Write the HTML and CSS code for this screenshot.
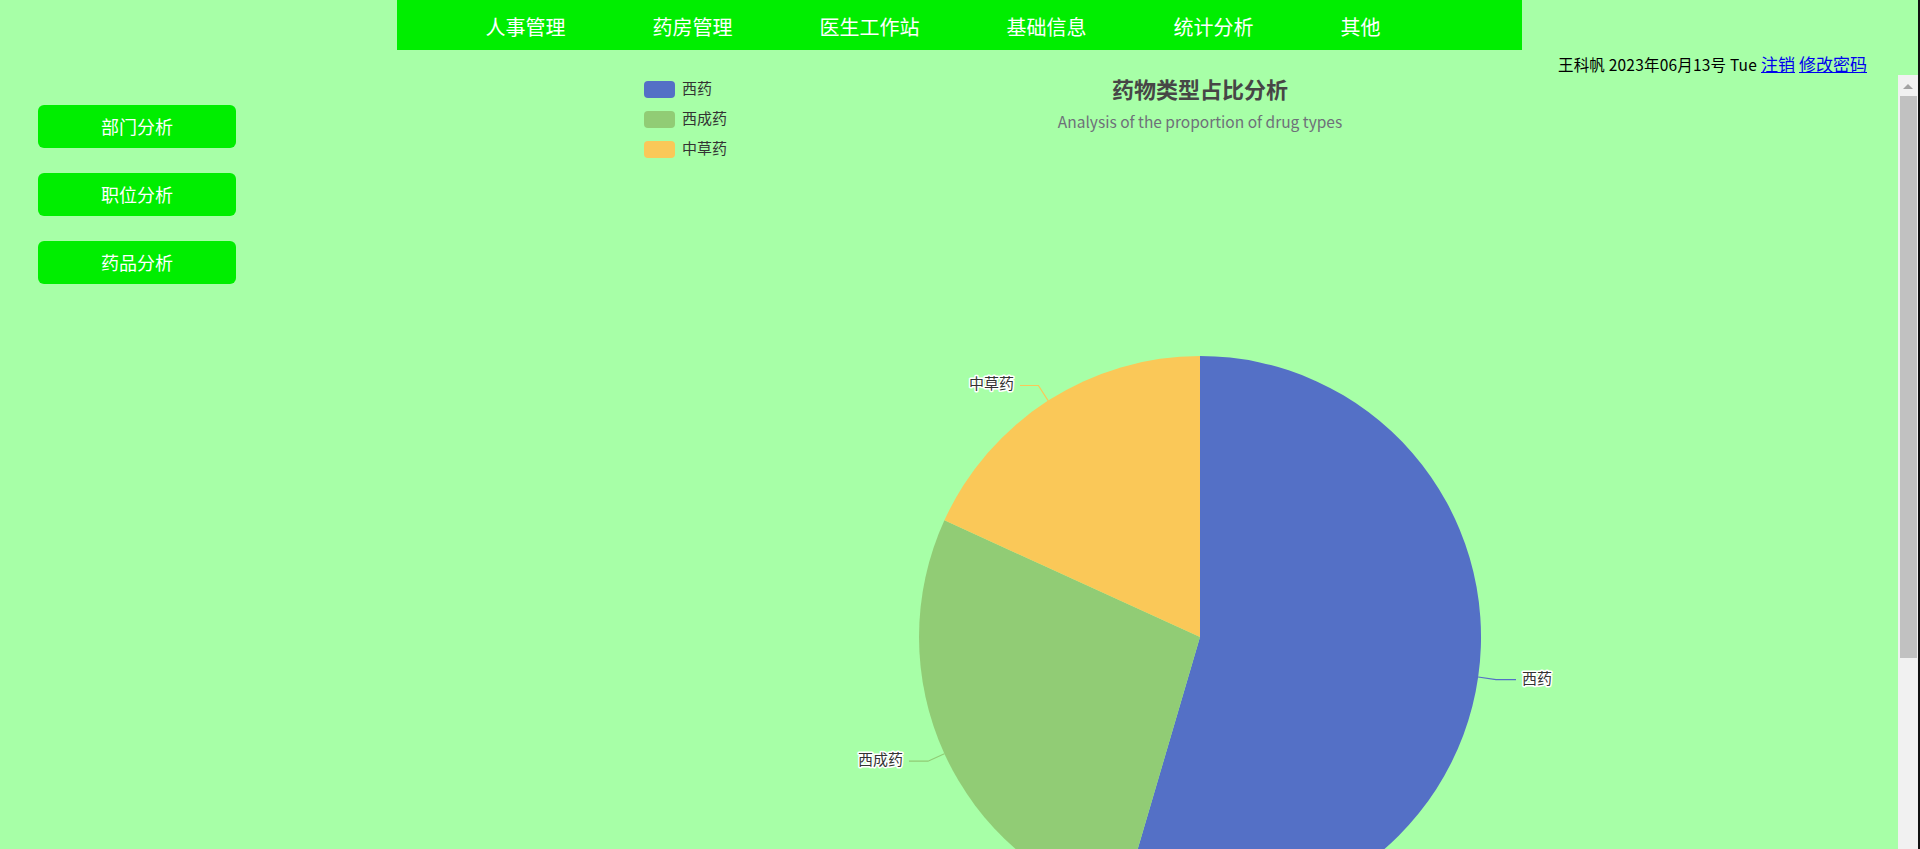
FILE: index.html
```html
<!DOCTYPE html>
<html lang="zh-CN">
<head>
<meta charset="utf-8">
<title>统计分析</title>
<link rel="stylesheet" href="styles.css">
</head>
<body>
<div class="page">
  <header class="top">
    <nav class="nav">
      <a href="#">人事管理</a>
      <a href="#">药房管理</a>
      <a href="#">医生工作站</a>
      <a href="#">基础信息</a>
      <a href="#">统计分析</a>
      <a href="#">其他</a>
    </nav>
  </header>
  <div class="userbar">
    <span class="info">王科帆 2023年06月13号 Tue</span>
    <a class="link" href="#">注销</a>
    <a class="link" href="#">修改密码</a>
  </div>
  <main class="main">
    <aside class="side">
      <a class="btn" href="#">部门分析</a>
      <a class="btn" href="#">职位分析</a>
      <a class="btn" href="#">药品分析</a>
    </aside>
    <section class="frame">
      <div class="canvas">
        <svg class="chart" viewBox="480 75 1418 774" width="1418" height="774" xmlns="http://www.w3.org/2000/svg">
          <g class="legend">
            <rect x="644" y="81" width="31" height="17" rx="4" fill="#5470c6"/>
            <text x="682" y="90" class="ltxt">西药</text>
            <rect x="644" y="111" width="31" height="17" rx="4" fill="#91cc75"/>
            <text x="682" y="120" class="ltxt">西成药</text>
            <rect x="644" y="141" width="31" height="17" rx="4" fill="#fac858"/>
            <text x="682" y="150" class="ltxt">中草药</text>
          </g>
          <text x="1200" y="92" class="title">药物类型占比分析</text>
          <text x="1200" y="124" class="subtitle">Analysis of the proportion of drug types</text>
          <path d="M1200 637 L1200 356 A281 281 0 1 1 1120.8 906.6 Z" fill="#5470c6"/>
          <path d="M1200 637 L1120.8 906.6 A281 281 0 0 1 944.4 520.3 Z" fill="#91cc75"/>
          <path d="M1200 637 L944.4 520.3 A281 281 0 0 1 1200 356 Z" fill="#fac858"/>
          <polyline points="1478.1,677 1496,679.6 1516,679.6" fill="none" stroke="#5470c6" stroke-width="1.2"/>
          <polyline points="944.4,753.7 928,761.2 909,761.2" fill="none" stroke="#91cc75" stroke-width="1.2"/>
          <polyline points="1048.1,400.6 1038.4,385.5 1020,385.5" fill="none" stroke="#fac858" stroke-width="1.2"/>
          <text x="1522" y="680" class="plbl">西药</text>
          <text x="903" y="761" class="plbl end">西成药</text>
          <text x="1014" y="385" class="plbl end">中草药</text>
        </svg>
      </div>
      <div class="scroll">
        <div class="arrow"></div>
        <div class="thumb"></div>
      </div>
    </section>
  </main>
</div>
</body>
</html>
```
FILE: styles.css
```css
html, body {
  margin: 0;
  padding: 0;
}
body {
  background: #a7ffa7;
  font-family: "Noto Sans CJK SC", "Microsoft YaHei", sans-serif;
  height: 849px;
  overflow: hidden;
}
.page {
  height: 849px;
  border-right: 2px solid #111;
  display: flex;
  flex-direction: column;
}
.top {
  display: flex;
  justify-content: center;
  height: 50px;
}
.nav {
  width: 1125px;
  height: 50px;
  background: #00ee00;
  display: flex;
  align-items: center;
  gap: 87px;
  padding: 3px 0 0 89px;
  box-sizing: border-box;
}
.nav a {
  color: #fff;
  font-size: 20px;
  line-height: 1;
  text-decoration: none;
}
.userbar {
  height: 25px;
  display: flex;
  justify-content: flex-end;
  align-items: center;
  gap: 4px;
  padding: 2px 51px 0 0;
  box-sizing: border-box;
  font-size: 15.5px;
  color: #000;
}
.info {
  letter-spacing: 0.2px;
}
.link {
  color: #0000ee;
  font-size: 17px;
  text-decoration: underline;
}
.main {
  flex: 1;
  display: flex;
  min-height: 0;
}
.side {
  width: 480px;
  flex: none;
  box-sizing: border-box;
  padding: 30px 0 0 38px;
  display: flex;
  flex-direction: column;
  gap: 25px;
}
.btn {
  width: 198px;
  height: 43px;
  background: #00ee00;
  border-radius: 6px;
  color: #fff;
  font-size: 18px;
  text-decoration: none;
  display: flex;
  align-items: center;
  justify-content: center;
  padding-bottom: 2px;
  box-sizing: border-box;
}
.frame {
  flex: 1;
  display: flex;
  min-width: 0;
  overflow: hidden;
}
.canvas {
  flex: 1;
}
.chart {
  display: block;
  overflow: visible;
}
.ltxt {
  font-size: 15px;
  fill: #333;
  dominant-baseline: middle;
}
.title {
  font-size: 22px;
  font-weight: 700;
  fill: #464646;
  text-anchor: middle;
  dominant-baseline: middle;
}
.subtitle {
  font-size: 15.5px;
  fill: #6e7079;
  text-anchor: middle;
  dominant-baseline: middle;
}
.plbl {
  font-size: 15px;
  fill: #333;
  stroke: #fff;
  stroke-width: 3px;
  stroke-linejoin: round;
  paint-order: stroke;
  dominant-baseline: middle;
}
.plbl.end {
  text-anchor: end;
}
.scroll {
  width: 20px;
  flex: none;
  background: #f1f1f1;
  display: flex;
  flex-direction: column;
}
.arrow {
  align-self: center;
  margin-top: 9px;
  width: 0;
  height: 0;
  border-left: 5px solid transparent;
  border-right: 5px solid transparent;
  border-bottom: 5px solid #a3a3a3;
}
.thumb {
  margin: 7px 0 0 2px;
  width: 17px;
  height: 562px;
  background: #c1c1c1;
}
```
